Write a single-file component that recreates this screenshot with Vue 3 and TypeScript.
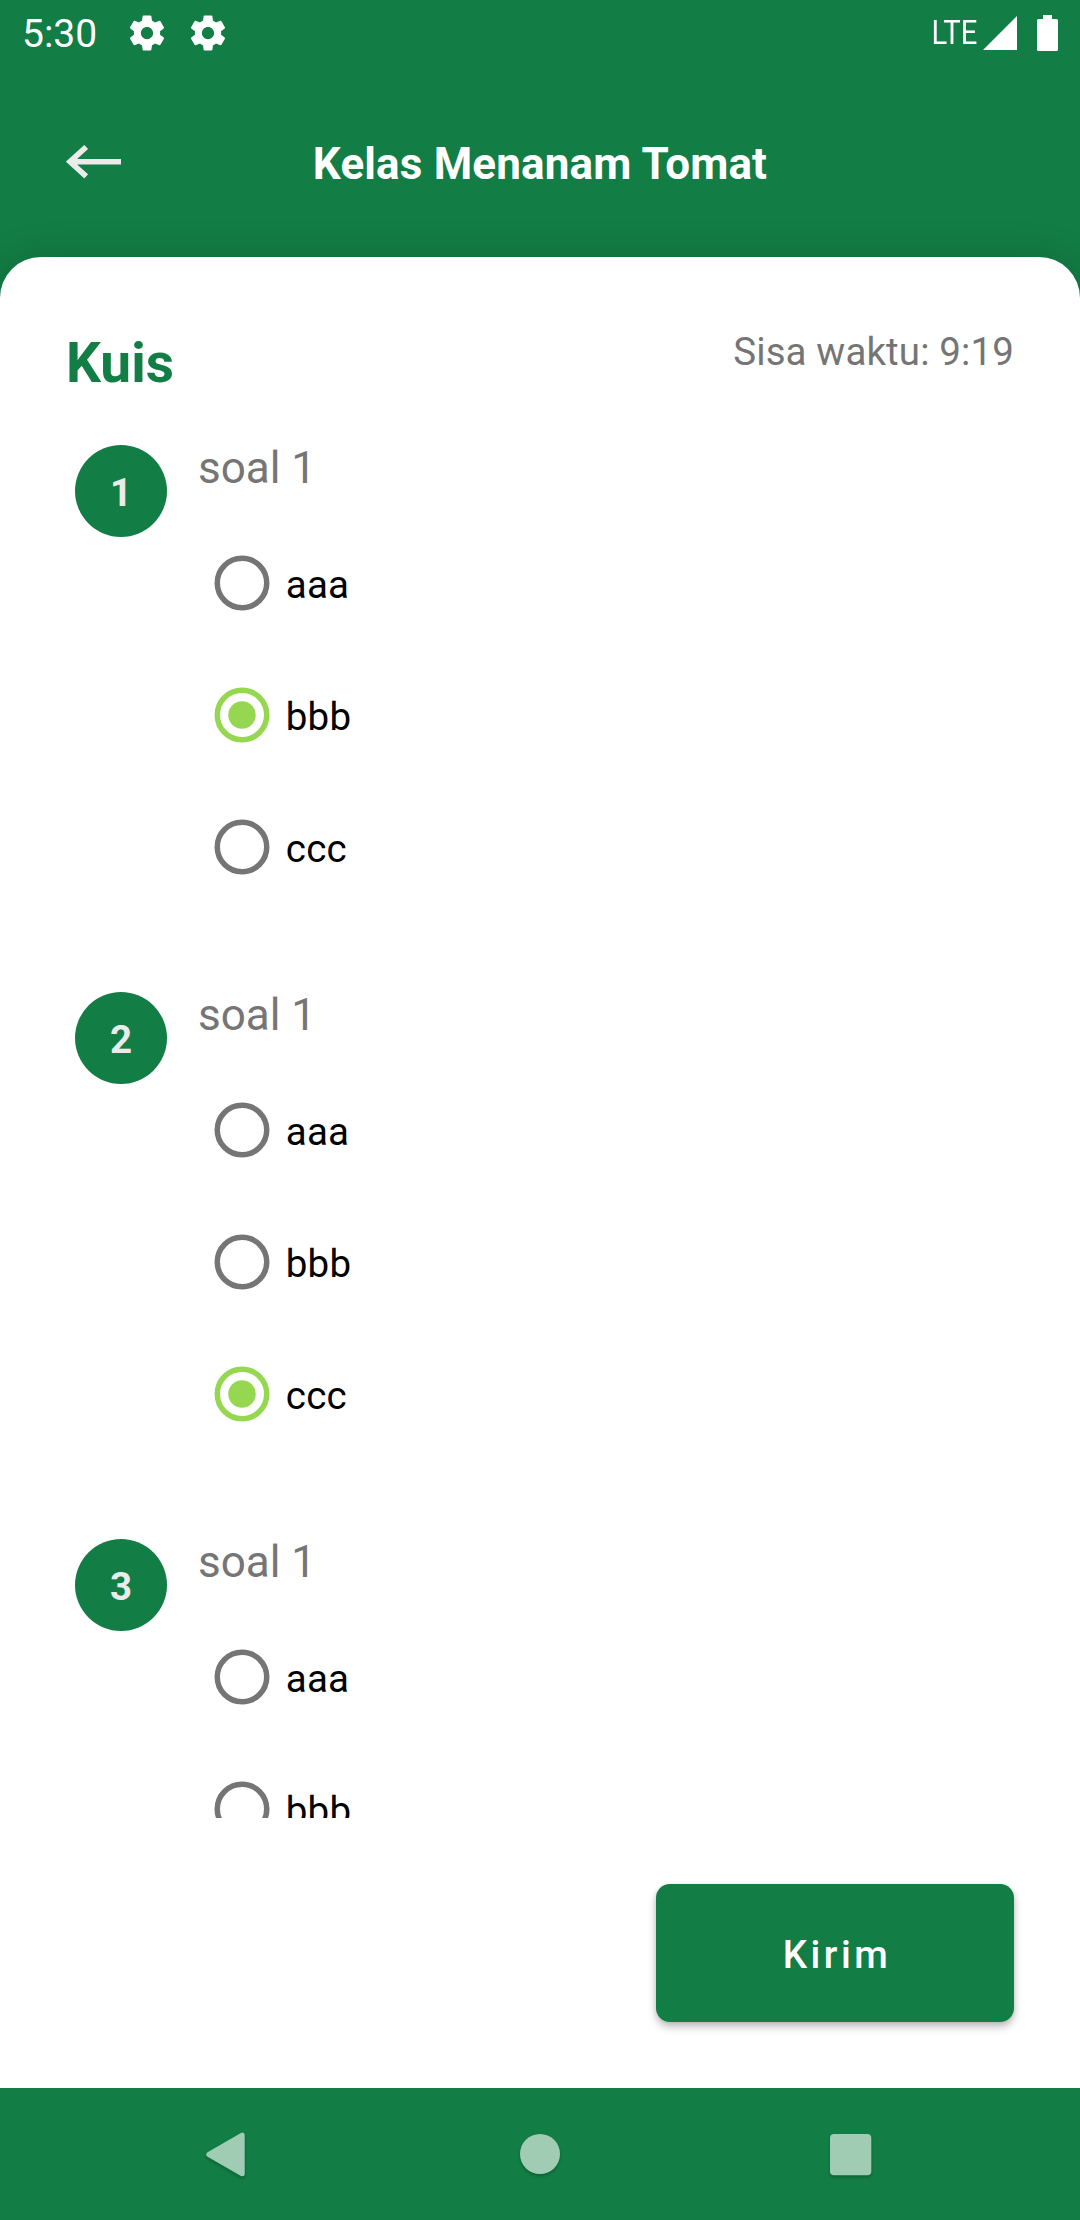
<script setup lang="ts">
import { ref } from 'vue'

interface Question {
  id: number
  text: string
  options: string[]
  selected: number | null
}

const title = 'Kelas Menanam Tomat'
const remaining = '9:19'
const questions = ref<Question[]>([
  { id: 1, text: 'soal 1', options: ['aaa', 'bbb', 'ccc'], selected: 1 },
  { id: 2, text: 'soal 1', options: ['aaa', 'bbb', 'ccc'], selected: 2 },
  { id: 3, text: 'soal 1', options: ['aaa', 'bbb'], selected: null },
])
</script>

<template>
  <div class="screen">
    <div class="status-bar">
      <span class="clock">5:30</span>
      <svg v-for="n in 2" :key="n" class="gear" viewBox="0 0 24 24">
        <path
          d="M19.43 12.98c.04-.32.07-.64.07-.98s-.03-.66-.07-.98l2.11-1.65c.19-.15.24-.42.12-.64l-2-3.46c-.12-.22-.39-.3-.61-.22l-2.49 1c-.52-.4-1.08-.73-1.69-.98l-.38-2.65C14.46 2.18 14.25 2 14 2h-4c-.25 0-.46.18-.49.42l-.38 2.65c-.61.25-1.17.59-1.69.98l-2.49-1c-.23-.09-.49 0-.61.22l-2 3.46c-.13.22-.07.49.12.64l2.11 1.65c-.04.32-.07.65-.07.98s.03.66.07.98l-2.11 1.65c-.19.15-.24.42-.12.64l2 3.46c.12.22.39.3.61.22l2.49-1c.52.4 1.08.73 1.69.98l.38 2.65c.03.24.24.42.49.42h4c.25 0 .46-.18.49-.42l.38-2.65c.61-.25 1.17-.59 1.69-.98l2.49 1c.23.09.49 0 .61-.22l2-3.46c.12-.22.07-.49-.12-.64l-2.11-1.65zM12 15.5c-1.93 0-3.5-1.57-3.5-3.5s1.57-3.5 3.5-3.5 3.5 1.57 3.5 3.5-1.57 3.5-3.5 3.5z"
        />
      </svg>
      <span class="network">LTE</span>
      <svg class="signal" viewBox="0 0 34 34"><path d="M34 0V34H0Z" /></svg>
      <svg class="battery" viewBox="0 0 21 36">
        <path d="M6 0H15V4H19.5Q21 4 21 5.5V34.5Q21 36 19.5 36H1.5Q0 36 0 34.5V5.5Q0 4 1.5 4H6Z" />
      </svg>
    </div>

    <header class="app-bar">
      <svg class="back" viewBox="0 0 55 34">
        <path d="M55 16.7H5M20.2 2L4 16.7L20.2 31.4" />
      </svg>
      <h1 class="title">{{ title }}</h1>
    </header>

    <main class="sheet">
      <div class="heading">
        <h2 class="section">Kuis</h2>
        <span class="timer">Sisa waktu: {{ remaining }}</span>
      </div>

      <div class="questions">
        <section v-for="q in questions" :key="q.id" class="question">
          <div class="number"><span>{{ q.id }}</span></div>
          <div class="body">
            <p class="text">{{ q.text }}</p>
            <div
              v-for="(option, i) in q.options"
              :key="option"
              class="option"
              :class="{ checked: q.selected === i }"
              @click="q.selected = i"
            >
              <svg class="radio" viewBox="0 0 56 56">
                <circle class="ring" cx="28" cy="28" r="24.75" />
                <circle v-if="q.selected === i" class="dot" cx="28" cy="28" r="13.75" />
              </svg>
              <span class="label">{{ option }}</span>
            </div>
          </div>
        </section>
      </div>

      <button class="submit" type="button">Kirim</button>
    </main>

    <nav class="nav-bar">
      <svg class="nav-icon" viewBox="0 0 60 60">
        <path d="M13.8 30.5L47.2 11.2V49.8Z" class="triangle" />
      </svg>
      <svg class="nav-icon" viewBox="0 0 60 60"><circle cx="30" cy="30" r="20" /></svg>
      <svg class="nav-icon" viewBox="0 0 60 60"><rect x="5" y="10" width="41.3" height="41.3" rx="4" /></svg>
    </nav>
  </div>
</template>

<style>
body {
  margin: 0;
}
</style>

<style scoped>
.screen {
  width: 1080px;
  height: 2220px;
  display: flex;
  flex-direction: column;
  overflow: hidden;
  background: #127d44;
  font-family: Roboto, "Liberation Sans", sans-serif;
}

.status-bar {
  height: 66px;
  flex: none;
  display: flex;
  align-items: flex-start;
  color: #fff;
  fill: #fff;
}
.clock {
  width: 102px;
  margin-left: 22px;
  font-size: 39px;
  line-height: 69px;
}
.gear {
  width: 42px;
  height: 42px;
  margin: 12px 17px 0 2px;
}
.network {
  margin-left: auto;
  font-size: 34px;
  font-weight: 400;
  line-height: 65px;
  transform: scaleX(0.86);
  transform-origin: right center;
}
.signal {
  width: 34px;
  height: 34px;
  margin: 16px 0 0 6px;
}
.battery {
  width: 21px;
  height: 36px;
  margin: 15px 22px 0 20px;
}

.app-bar {
  height: 191px;
  flex: none;
  display: grid;
  grid-template-columns: 66px 1fr 66px;
}
.back {
  width: 55px;
  height: 34px;
  margin: 144.5px 0 0 66px;
  margin-top: 79px;
  fill: none;
  stroke: #ebebeb;
  stroke-width: 5.6;
}
.title {
  margin: 0;
  padding-top: 73px;
  font-size: 44px;
  font-weight: 700;
  line-height: 50px;
  letter-spacing: 0.15px;
  text-align: center;
  color: #fff;
}

.sheet {
  flex: 1;
  min-height: 0;
  display: flex;
  flex-direction: column;
  background: #fff;
  border-radius: 41px 41px 0 0;
  box-shadow: 0 6px 44px rgba(0, 0, 0, 0.2);
}
.heading {
  height: 169px;
  flex: none;
  display: flex;
  justify-content: space-between;
  align-items: flex-start;
  padding: 0 66px;
}
.section {
  margin: 74px 0 0;
  font-size: 55px;
  font-weight: 700;
  line-height: 65px;
  color: #127d44;
}
.timer {
  margin-top: 70px;
  font-size: 38.5px;
  line-height: 50px;
  letter-spacing: 0.12px;
  color: #757575;
}

.questions {
  height: 1392px;
  flex: none;
  padding-top: 17px;
  box-sizing: border-box;
  overflow: hidden;
}
.question {
  height: 547px;
  display: flex;
  align-items: flex-start;
  padding-left: 75px;
}
.number {
  width: 92px;
  height: 92px;
  margin: 2px 31px 0 0;
  display: flex;
  align-items: center;
  justify-content: center;
  border-radius: 50%;
  background: #127d44;
  color: #ebebeb;
  font-size: 38.5px;
  font-weight: 700;
  line-height: 46px;
}
.number span {
  padding-top: 4px;
}
.text {
  margin: 0 0 24px;
  font-size: 44px;
  line-height: 50px;
  color: #757575;
}
.option {
  height: 132px;
  display: flex;
  align-items: center;
  padding-left: 16px;
}
.radio {
  width: 56px;
  height: 56px;
  margin-right: 15.8px;
}
.ring {
  fill: none;
  stroke: #757575;
  stroke-width: 5.5;
}
.checked .ring {
  stroke: #96d751;
}
.dot {
  fill: #96d751;
}
.label {
  padding-top: 4px;
  font-size: 38.5px;
  line-height: 46px;
  letter-spacing: 0.2px;
  color: #000;
}

.submit {
  width: 358px;
  height: 138px;
  margin: 66px 66px 0 auto;
  padding: 4px 0 0 4px;
  border: 0;
  border-radius: 14px;
  background: #127d44;
  box-shadow: 0 5px 8px rgba(0, 0, 0, 0.24), 0 1px 5px rgba(0, 0, 0, 0.1);
  color: #fff;
  font-family: inherit;
  font-size: 38.5px;
  font-weight: 500;
  line-height: 46px;
  letter-spacing: 3.44px;
}

.nav-bar {
  height: 132px;
  flex: none;
  display: flex;
  justify-content: space-between;
  align-items: center;
  padding: 0 195px;
  box-sizing: border-box;
  background: #127d44;
}
.nav-icon {
  width: 60px;
  height: 60px;
  fill: #a0ccb4;
  filter: drop-shadow(0 2px 1.5px rgba(0, 0, 0, 0.22));
}
.triangle {
  stroke: #a0ccb4;
  stroke-width: 5;
  stroke-linejoin: round;
}
</style>
